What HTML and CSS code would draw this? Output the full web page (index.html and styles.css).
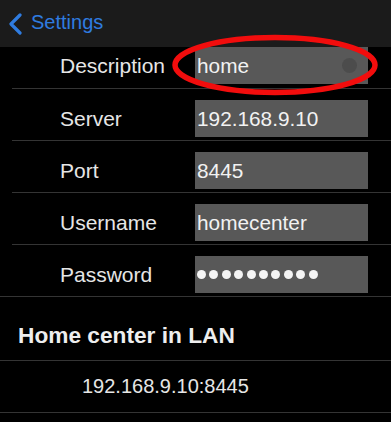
FILE: index.html
```html
<!DOCTYPE html>
<html lang="en">
<head>
<meta charset="UTF-8" />
<meta name="viewport" content="width=device-width, initial-scale=1" />
<title>Settings</title>
<link rel="stylesheet" href="styles.css">
</head>
<body>
  <div class="screen">

    <div class="nav">
      <svg class="back-icon" width="16" height="22" viewBox="0 0 16 22">
        <polyline points="13,2 4,11 13,20" fill="none" stroke="#2f7ce0" stroke-width="3.2" stroke-linecap="round" stroke-linejoin="round"/>
      </svg>
      <span class="back-text">Settings</span>
    </div>

    <div class="form">
      <div class="row row-first">
        <div class="label">Description</div>
        <div class="field">home<span class="clear"></span></div>
      </div>
      <div class="row">
        <div class="label">Server</div>
        <div class="field">192.168.9.10</div>
      </div>
      <div class="row">
        <div class="label">Port</div>
        <div class="field">8445</div>
      </div>
      <div class="row">
        <div class="label">Username</div>
        <div class="field">homecenter</div>
      </div>
      <div class="row row-last">
        <div class="label">Password</div>
        <div class="field dots">
          <i></i><i></i><i></i><i></i><i></i><i></i><i></i><i></i><i></i><i></i>
        </div>
      </div>
    </div>

    <div class="section-title">Home center in LAN</div>
    <div class="item">192.168.9.10:8445</div>

    <!-- red marker drawn over the description field -->
    <svg class="marker" width="216" height="66" viewBox="0 0 216 66">
      <ellipse cx="105" cy="31" rx="100" ry="27.5" fill="none" stroke="#f20d0d" stroke-width="5.5"/>
    </svg>
  </div>
</body>
</html>
```

FILE: styles.css
```css
body {
  margin: 0;
  background: #000;
  font-family: "Liberation Sans", Arial, sans-serif;
  color: #ececec;
}

.screen {
  position: relative;
  width: 391px;
  height: 422px;
  overflow: hidden;
  background: #000;
}

.nav {
  height: 47px;
  background: #1b1b1b;
  display: flex;
  align-items: center;
  padding-left: 7px;
  box-sizing: border-box;
}

.back-icon {
  display: block;
  margin-top: 1px;
}

.back-text {
  color: #2f7ce0;
  font-size: 20px;
  margin-left: 8px;
  margin-top: -3px;
}

.row {
  display: flex;
  align-items: center;
  margin-left: 12px;
  padding: 11px 0 3px 48px;
  border-bottom: 1px solid #343434;
}

.row-first {
  padding-top: 0;
  padding-bottom: 4px;
}

.row-last {
  margin-left: 0;
  padding-left: 60px;
}

.label {
  width: 135px;
  font-size: 21px;
  color: #e6e6e6;
}

.field {
  position: relative;
  width: 171px;
  height: 37px;
  padding-left: 2px;
  background: #585858;
  font-size: 20.8px;
  line-height: 37px;
  color: #f2f2f2;
}

.clear {
  position: absolute;
  right: 11px;
  top: 11px;
  width: 15px;
  height: 15px;
  border-radius: 50%;
  background: #4c4c4c;
}

.dots {
  display: flex;
  align-items: center;
  gap: 3.4px;
}

.dots i {
  width: 9px;
  height: 9px;
  border-radius: 50%;
  background: #f4f4f4;
}

.section-title {
  padding: 24px 0 11px 18px;
  font-size: 22.7px;
  font-weight: bold;
  line-height: 28px;
  color: #eeeeee;
  border-bottom: 1px solid #343434;
}

.item {
  height: 51px;
  line-height: 51px;
  padding-left: 82px;
  font-size: 20px;
  color: #e6e6e6;
  border-bottom: 1px solid #343434;
}

.marker {
  position: absolute;
  left: 170px;
  top: 34px;
}
```
